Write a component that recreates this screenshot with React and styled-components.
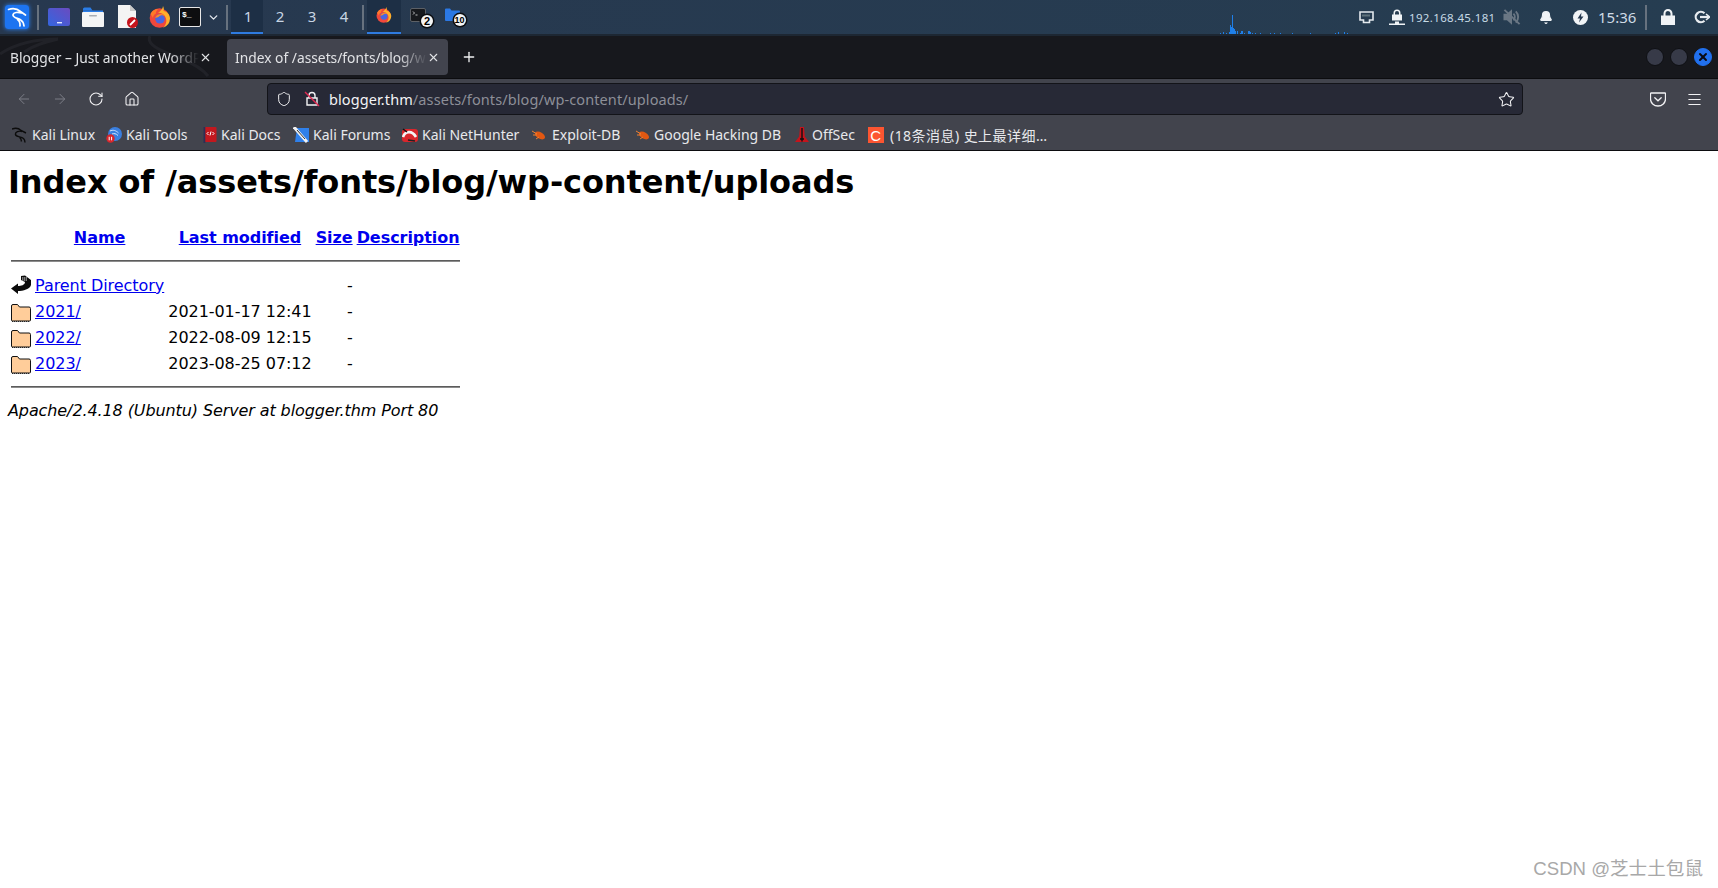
import React from "react";
import styled, { createGlobalStyle } from "styled-components";
import { ArrowLeft, ArrowRight, RotateCw, Home, Shield, Star, Menu, X, Plus, Bell, ChevronDown } from "lucide-react";

const GlobalStyle = createGlobalStyle`
  html, body { margin: 0; padding: 0; background: #fff; }
  body { font-family: "DejaVu Sans", sans-serif; overflow: hidden; }
`;

const UI_FONT = `"Noto Sans", "Noto Sans CJK SC", sans-serif`;

const Screen = styled.div`
  width: 1718px;
  height: 888px;
  position: relative;
  overflow: hidden;
  display: flex;
  flex-direction: column;
`;

/* kali panel */
const Panel = styled.div`
  height: 34px;
  flex: none;
  position: relative;
  display: flex;
  align-items: center;
  padding-left: 5px;
  background: linear-gradient(90deg, #27384f, #263d51);
  border-bottom: 2px solid #1d2733;
  color: #dfe6ee;
  font-family: ${UI_FONT};
`;
const PanelIcon = styled.div`
  width: ${(p) => p.$w}px;
  margin-left: ${(p) => p.$ml || 0}px;
  height: 34px;
  flex: none;
  display: flex;
  align-items: center;
  justify-content: center;
`;
const LogoGlow = styled.div`
  display: flex;
  border-radius: 3px;
  box-shadow: 0 0 4px #2a86ff;
`;
const PanelSep = styled.div`
  width: 2px;
  height: 25px;
  flex: none;
  margin-left: ${(p) => p.$ml}px;
  background: #67727f;
`;
const Workspaces = styled.div`
  display: flex;
  margin-left: 3px;
`;
const Workspace = styled.div`
  width: 32px;
  height: 34px;
  flex: none;
  box-sizing: border-box;
  display: flex;
  align-items: center;
  justify-content: center;
  padding-left: 2px;
  font-size: 15px;
  color: #c9d6e4;
  background: ${(p) => (p.$active ? "#1d2f45" : "transparent")};
  border-bottom: 2px solid ${(p) => (p.$active ? "#2f7be0" : "transparent")};
`;
const WinButton = styled.div`
  width: 34px;
  height: 34px;
  flex: none;
  box-sizing: border-box;
  margin-left: ${(p) => p.$ml || 0}px;
  display: flex;
  align-items: center;
  justify-content: center;
  padding-bottom: 3px;
  background: ${(p) => (p.$active ? "#1d2f45" : "transparent")};
  border-bottom: 2px solid ${(p) => (p.$active ? "#2f7be0" : "transparent")};
`;
const BadgeWrap = styled.div`
  position: relative;
  display: flex;
`;
const Badge = styled.span`
  position: absolute;
  right: ${(p) => p.$r}px;
  bottom: ${(p) => p.$b}px;
  width: 12px;
  height: 12px;
  border-radius: 50%;
  background: #f4f4f4;
  color: #000;
  font-family: "Liberation Sans", sans-serif;
  font-size: ${(p) => p.$size}px;
  font-weight: 700;
  line-height: 12px;
  text-align: center;
  box-shadow: 0 0 0 1.5px #0c0e12;
`;
const Tray = styled.div`
  margin-left: auto;
  display: flex;
  align-items: center;
  height: 34px;
  padding-right: 8px;
`;
const TrayIcon = styled.div`
  width: ${(p) => p.$w}px;
  margin-left: ${(p) => p.$ml}px;
  flex: none;
  display: flex;
  align-items: center;
  justify-content: center;
`;
const IpText = styled.span`
  font-size: 11.5px;
  margin-left: 4px;
  width: 87px;
  color: #c6dbe6;
  letter-spacing: 0.35px;
  white-space: nowrap;
`;
const Clock = styled.span`
  font-size: 15px;
  width: 36px;
  margin-left: 10px;
  color: #cfdbe6;
  white-space: nowrap;
`;
const NetGraph = styled.svg`
  position: absolute;
  left: 1220px;
  bottom: 0;
`;

/* browser chrome */
const TabBar = styled.div`
  height: 42px;
  flex: none;
  position: relative;
  display: flex;
  align-items: center;
  background: #17181d;
  border-bottom: 1px solid #0c0c0f;
  font-family: ${UI_FONT};
  font-size: 13.8px;
  color: #e2e3e6;
`;
const TabDragon = styled.svg`
  position: absolute;
  left: 0;
  top: 0;
`;
const Tab = styled.div`
  width: ${(p) => p.$w}px;
  margin-left: ${(p) => p.$ml}px;
  height: 36px;
  flex: none;
  position: relative;
  box-sizing: border-box;
  display: flex;
  align-items: center;
  padding: 0 8px 0 ${(p) => p.$pl}px;
  border-radius: 4px;
  background: ${(p) => (p.$active ? "#42444e" : "transparent")};
`;
const TabTitle = styled.span`
  flex: 1;
  overflow: hidden;
  white-space: nowrap;
  mask-image: linear-gradient(90deg, #000 85%, transparent);
`;
const NewTab = styled.div`
  margin-left: 13px;
  display: flex;
  position: relative;
`;
const WinControls = styled.div`
  margin-left: auto;
  margin-right: 6px;
  display: flex;
  gap: 6px;
  position: relative;
`;
const WinDot = styled.div`
  width: 18px;
  height: 18px;
  border-radius: 50%;
  box-sizing: border-box;
  display: flex;
  align-items: center;
  justify-content: center;
  background: ${(p) => (p.$close ? "#2170ee" : "#373a48")};
  border: 1px solid ${(p) => (p.$close ? "#2170ee" : "#0f1014")};
`;
const Toolbar = styled.div`
  height: 36px;
  flex: none;
  box-sizing: border-box;
  display: flex;
  align-items: center;
  padding: 4px 0 0 6px;
  background: #42444d;
  font-family: ${UI_FONT};
`;
const ToolBtn = styled.div`
  width: ${(p) => p.$w || 36}px;
  flex: none;
  display: flex;
  justify-content: center;
  color: ${(p) => (p.$dim ? "#7b7d86" : "#f2f2f4")};
`;
const UrlBar = styled.div`
  width: 1256px;
  height: 32px;
  flex: none;
  margin: 0 117px;
  box-sizing: border-box;
  display: flex;
  align-items: center;
  padding-left: 8px;
  background: #272936;
  border: 1px solid #131419;
  border-radius: 4px;
  color: #f3f3f5;
  font-size: 14.5px;
  letter-spacing: 0.1px;
`;
const LockSlot = styled.span`
  display: flex;
  margin-left: 12px;
`;
const UrlText = styled.span`
  margin-left: 9px;
  flex: 1;
  white-space: nowrap;
`;
const UrlPath = styled.span`
  color: #8d8f98;
`;
const BookmarkBar = styled.div`
  height: 36px;
  flex: none;
  box-sizing: border-box;
  display: flex;
  align-items: center;
  padding: 4px 0 0 12px;
  background: #42444d;
  border-bottom: 1px solid #0c0c0f;
  font-family: ${UI_FONT};
  font-size: 14px;
  color: #e8e9ec;
`;
const Bookmark = styled.div`
  width: ${(p) => p.$w}px;
  flex: none;
  display: flex;
  align-items: center;
  gap: ${(p) => p.$gap}px;
  letter-spacing: ${(p) => p.$ls || 0}px;
  white-space: nowrap;
`;
const BookmarkIcon = styled.svg`
  flex: none;
`;

/* the apache index page */
const Page = styled.div`
  flex: 1;
  background: #fff;
  color: #000;
  padding: 13px 8px 0;
  font-size: 16px;
`;
const Title = styled.h1`
  font-size: 32px;
  font-weight: bold;
  margin: 0 0 22px;
  line-height: 37px;
  letter-spacing: -0.1px;
`;
const Table = styled.table`
  border-spacing: 2px;
  letter-spacing: -0.05px;
`;
const Head = styled.th`
  padding: 1px;
  font-weight: bold;
  text-align: center;
  vertical-align: middle;
`;
const Cell = styled.td`
  padding: 1px;
  vertical-align: middle;
  text-align: ${(p) => p.$align || "left"};
`;
const IconCell = styled(Cell)`
  vertical-align: top;
`;
const IconBox = styled.svg`
  display: block;
`;
const Link = styled.a`
  color: #0000ee;
  text-decoration: underline;
`;
const Rule = styled.hr`
  margin: 8px 0;
  border: 0;
  border-top: 1px solid #5c5c5c;
  border-bottom: 1px solid #8c8c8c;
`;
const Footer = styled.address`
  font-style: italic;
  margin: 2px 0 16px;
  letter-spacing: -0.1px;
`;
const Watermark = styled.div`
  position: absolute;
  right: 15px;
  bottom: 8px;
  font-family: "Liberation Sans", "Noto Sans CJK SC", sans-serif;
  font-size: 18.6px;
  color: #a8a8a8;
  white-space: nowrap;
`;

const KaliLogo = () => (
  <svg width="24" height="24" viewBox="0 0 24 24">
    <rect width="24" height="24" rx="3" fill="#1d74f0" />
    <path d="M3.500 4.500c4.500-1.500 9-.5 12 2l5 3.500M16.500 8c-3.500-1.200-8-.8-8.500 1.800-.4 2.700 4.500 3.200 7.500 5 1.800 1.100 3 3 3.500 6M12.500 14.500c1.800 1.300 2.800 3.500 2.500 6.500" fill="none" stroke="#fff" strokeWidth="1.700" strokeLinecap="round" />
  </svg>
);
const Launcher = () => (
  <svg width="22" height="18" viewBox="0 0 22 18">
    <defs>
      <linearGradient id="lg" x1="0" y1="1" x2="1" y2="0">
        <stop offset="0" stopColor="#3366e0" />
        <stop offset="1" stopColor="#6a4bc0" />
      </linearGradient>
    </defs>
    <rect width="22" height="18" rx="2" fill="url(#lg)" />
    <rect x="9" y="14" width="5" height="1.400" fill="#dfe6ff" />
  </svg>
);
const FilesIcon = () => (
  <svg width="22" height="20" viewBox="0 0 22 20">
    <path d="M1 2A1.500 1.500 0 0 1 2.500 .5h6l2 3H1z" fill="#2a7de8" />
    <path d="M1 3.500h20V5H1z" fill="#2a7de8" />
    <rect y="5" width="22" height="15" rx="1" fill="#f3f4f5" />
    <rect x="7" y="8" width="8" height="1.500" rx=".7" fill="#a9adb3" />
  </svg>
);
const DocIcon = () => (
  <svg width="22" height="24" viewBox="0 0 22 24">
    <path d="M1 0h12l6 6v17H1z" fill="#f4f4f4" />
    <path d="M13 0l6 6h-6z" fill="#c9c9c9" />
    <circle cx="15.500" cy="17.500" r="5.500" fill="#c5141c" />
    <path d="M13 20l5-5" stroke="#fff" strokeWidth="1.800" />
  </svg>
);
const Firefox = ({ size = 22 }) => (
  <svg width={size} height={size} viewBox="0 0 22 22">
    <circle cx="10.500" cy="12" r="9.800" fill="#f0483c" />
    <path d="M14 0c1 2 1 3.500 .5 5C18 5.500 21 8.500 21 12.500a10 10 0 0 1-7 9.200c3-2.500 4.200-6.500 2.600-10.200C15.500 8 12 6.500 9 6.800 11.500 5 14 3 14 0z" fill="#ffb02a" />
    <path d="M1.500 8C3 4.500 6 3 9 3 7.800 4.500 6.500 6 7 7.500 5 8.500 4 10 4 12z" fill="#ff7a2a" />
    <circle cx="11" cy="12.800" r="4.800" fill="#4a66e0" />
    <path d="M6.200 12c.8-2.500 3-4 5.800-4 1.500 0 3 .7 4 2-2-1-5-1-6.500 1z" fill="#ff8a24" />
  </svg>
);
const TerminalIcon = () => (
  <svg width="22" height="20" viewBox="0 0 22 20">
    <rect x=".5" y=".5" width="21" height="19" rx="1.500" fill="#0d0e10" stroke="#e8e8e8" />
    <text x="3" y="9.500" fontSize="8" fontWeight="700" fill="#fff" fontFamily="Liberation Mono, monospace">$_</text>
  </svg>
);
const TerminalSmall = () => (
  <svg width="16" height="14" viewBox="0 0 16 14">
    <rect x=".5" y=".5" width="15" height="13" rx="1.500" fill="#17191d" stroke="#5c6066" />
    <path d="M3 3.500l1.500 1.500L3 6.500M5.500 7h2" stroke="#e8e8e8" fill="none" strokeWidth=".8" />
  </svg>
);
const FolderSmall = () => (
  <svg width="15" height="13" viewBox="0 0 15 13">
    <path d="M0 1.500A1 1 0 0 1 1 .5h4l1.500 2H14a1 1 0 0 1 1 1V12a1 1 0 0 1-1 1H1a1 1 0 0 1-1-1z" fill="#2b78e4" />
  </svg>
);
const NetIcon = () => (
  <svg width="15" height="13" viewBox="0 0 15 13" fill="none" stroke="#e4e9ee" strokeWidth="1.600">
    <path d="M1 1h13v8h-3.500v2.500h-6V9H1z" />
    <path d="M4 3.500v2M6 3.500v2M8 3.500v2M10 3.500v2" strokeWidth="1" stroke="#9aa" />
  </svg>
);
const VpnLock = () => (
  <svg width="16" height="17" viewBox="0 0 16 17" fill="#f0f3f6">
    <path d="M4.500 5.500V4a3.500 3.500 0 0 1 7 0v1.500H13v6H3v-6zM6 5.500h4V4a2 2 0 0 0-4 0z" />
    <rect y="14.500" width="16" height="1.500" />
    <rect x="6" y="12.500" width="4" height="3" />
  </svg>
);
const MuteIcon = () => (
  <svg width="19" height="18" viewBox="0 0 19 18" fill="none" stroke="#6a7784" strokeWidth="2">
    <path d="M1.500 6.500h3l4-3.500v12l-4-3.500h-3z" fill="#6a7784" />
    <path d="M11 5.500a5 5 0 0 1 0 7M13.500 3a8.500 8.500 0 0 1 0 12" />
    <path d="M1.500 1.500l16 15" />
  </svg>
);
const BoltIcon = () => (
  <svg width="15" height="15" viewBox="0 0 15 15">
    <circle cx="7.500" cy="7.500" r="7.500" fill="#f2f4f6" />
    <path d="M8.500 2.500l-4 6H7l-1 4 4.500-6H8z" fill="#27394f" />
  </svg>
);
const LogoutIcon = () => (
  <svg width="16" height="14" viewBox="0 0 16 14" fill="none" stroke="#e8ecf0" strokeWidth="2.200">
    <path d="M10.500 3.200a5.200 5.200 0 1 0 0 7.600" />
    <path d="M6 7h9" />
    <path d="M12 4l3.500 3-3.500 3" strokeWidth="1.600" />
  </svg>
);
const LockFill = () => (
  <svg width="14" height="16" viewBox="0 0 14 16" fill="#f0f3f6">
    <path d="M2.500 6.500v-2a4.500 4.500 0 0 1 9 0v2H14V16H0V6.500zM4.500 6.500h5v-2a2.500 2.500 0 0 0-5 0z" />
  </svg>
);
const PocketIcon = () => (
  <svg width="16" height="15" viewBox="0 0 16 15" fill="none" stroke="#f2f2f4" strokeWidth="1.300">
    <path d="M1 1h14a.5.5 0 0 1 .5.5V7a7.500 7 0 0 1-15 0V1.500A.5.5 0 0 1 1 1z" />
    <path d="M4.800 5.800L8 8.800l3.200-3" strokeLinecap="round" />
  </svg>
);
const InsecureLock = () => (
  <svg width="16" height="16" viewBox="0 0 16 16" fill="none">
    <path d="M5 7V4.500a3 3 0 0 1 6 0V7M3 7h10v7H3z" stroke="#f2f2f4" strokeWidth="1.400" />
    <path d="M1 1l14 14" stroke="#e22850" strokeWidth="1.400" />
  </svg>
);

const bookmarkIcons = {
  dragon: (
    <path d="M0 2c3-1 7-.5 9 1.500l5 2.500M10 4.500C7 3.500 3 5 3.500 7.500 4 10 9 9.500 11.500 11.500c1 1 1.500 2.500 1.500 4M7.500 10.500c1.500 1 2 2.500 1.800 4" fill="none" stroke="#0c0c0c" strokeWidth="1.400" />
  ),
  tools: (
    <>
      <circle cx="9" cy="7" r="7" fill="#3a7fe0" />
      <path d="M4 4c3-1.500 6-.5 8.500 2M6 7c2-.8 4-.5 6 1.500" stroke="#d5e6ff" fill="none" />
      <circle cx="4.500" cy="11.500" r="4.200" fill="#d8262c" />
      <path d="M3.200 9.800v3.500M5.600 9.800v3.500" stroke="#fff" />
    </>
  ),
  docs: (
    <>
      <rect x="2.500" width="12" height="15" rx="1" fill="#c2181e" />
      <rect x="1.500" width="1.800" height="16" fill="#2d2f55" />
      <path d="M6.500 5L5 6.500 6.500 8M10.500 5L12 6.500 10.500 8M9 4.500l-1 4" stroke="#fff" fill="none" />
    </>
  ),
  forums: (
    <>
      <path d="M4 1h12v14H2z" fill="#2f80ea" />
      <path d="M1 0l13 15" stroke="#f2f2f2" strokeWidth="3" />
      <path d="M4 3l8 9" stroke="#333" strokeWidth="1" />
    </>
  ),
  nethunter: (
    <>
      <rect y="2" width="16" height="13" rx="3" fill="#d9262c" />
      <path d="M1 10c2-6 9-7 13 0" fill="none" stroke="#f4f4f4" strokeWidth="2.600" />
      <path d="M6 13l7 1" stroke="#222" strokeWidth="1.500" />
      <path d="M1 2l4 3" stroke="#111" strokeWidth="1.500" />
    </>
  ),
  exploit: (
    <>
      <ellipse cx="9" cy="8.500" rx="5.500" ry="3.200" transform="rotate(30 9 8.500)" fill="#e25812" />
      <path d="M1 4l5 3M2 8h4M5 12l3-2" stroke="#f08030" />
    </>
  ),
  offsec: (
    <>
      <path d="M6 0h4l.8 9.500L15 15H1l4.200-5.500z" fill="#c4141c" />
      <path d="M8 1v13.500M6 12h4" stroke="#111" strokeWidth="1.400" />
    </>
  ),
  csdn: (
    <>
      <rect width="16" height="16" fill="#fc5531" />
      <text x="2.200" y="13.500" fontSize="15" fontFamily="Liberation Sans, sans-serif" fill="#fff">C</text>
    </>
  ),
};

const bookmarks = [
  { icon: "dragon", label: "Kali Linux", w: 94, gap: 4 },
  { icon: "tools", label: "Kali Tools", w: 96, gap: 4 },
  { icon: "docs", label: "Kali Docs", w: 91, gap: 3 },
  { icon: "forums", label: "Kali Forums", w: 109, gap: 4 },
  { icon: "nethunter", label: "Kali NetHunter", w: 129, gap: 4 },
  { icon: "exploit", label: "Exploit-DB", w: 104, gap: 5 },
  { icon: "exploit", label: "Google Hacking DB", w: 159, gap: 3 },
  { icon: "offsec", label: "OffSec", w: 74, gap: 2 },
  { icon: "csdn", label: "(18条消息) 史上最详细…", w: 220, gap: 6, ls: 0.45 },
];

const ParentIcon = () => (
  <IconBox width="20" height="22" viewBox="0 0 20 22">
    <path d="M0 14.500L7 9.500V12c3 0 7-1 7-4l-4-2V2l4-.5L20 6v5c-1 4-8 6-13 6v3z" fill="#0b0b0b" />
    <path d="M11 3h5v4h-5z" fill="#7a7a7a" />
    <path d="M12.500 3v4M14.500 3v4" stroke="#222" strokeWidth=".7" />
  </IconBox>
);
const FolderIcon = () => (
  <IconBox width="20" height="22" viewBox="0 0 20 22">
    <path d="M.5 6A1.500 1.500 0 0 1 2 4.500h4.500l2 2.500H18A1.500 1.500 0 0 1 19.500 8.500V20a1 1 0 0 1-1 1H1.500a1 1 0 0 1-1-1z" fill="#ffcd9a" stroke="#111" />
    <path d="M1 21.500h18" stroke="#222" strokeDasharray="1 1" />
  </IconBox>
);

const rows = [
  { name: "2021/", date: "2021-01-17 12:41" },
  { name: "2022/", date: "2022-08-09 12:15" },
  { name: "2023/", date: "2023-08-25 07:12" },
];

const netBars = [[0,1],[3,2],[6,1],[9,2],[10,9],[11,7],[12,19],[13,6],[14,5],[15,3],[17,3],[20,1],[21,3],[22,3],[24,1],[28,3],[29,3],[30,2],[32,1],[35,1],[40,1],[50,1],[54,1],[60,1],[72,1],[90,1],[115,1],[118,2],[124,2],[127,1]];

const App = () => {
  return (
    <Screen>
      <GlobalStyle />
      <Panel>
        <PanelIcon $w={24}><LogoGlow><KaliLogo /></LogoGlow></PanelIcon>
        <PanelSep $ml={8} />
        <PanelIcon $w={22} $ml={9}><Launcher /></PanelIcon>
        <PanelIcon $w={22} $ml={12}><FilesIcon /></PanelIcon>
        <PanelIcon $w={22} $ml={13}><DocIcon /></PanelIcon>
        <PanelIcon $w={22} $ml={10}><Firefox /></PanelIcon>
        <PanelIcon $w={22} $ml={8}><TerminalIcon /></PanelIcon>
        <PanelIcon $w={14} $ml={5}><ChevronDown size={13} color="#e4e8ee" strokeWidth={2.5} /></PanelIcon>
        <PanelSep $ml={6} />
        <Workspaces>
          <Workspace $active>1</Workspace>
          <Workspace>2</Workspace>
          <Workspace>3</Workspace>
          <Workspace>4</Workspace>
        </Workspaces>
        <PanelSep $ml={3} />
        <WinButton $active $ml={3}><Firefox size={16} /></WinButton>
        <WinButton>
          <BadgeWrap>
            <TerminalSmall />
            <Badge $r={-7} $b={-5} $size={11}>2</Badge>
          </BadgeWrap>
        </WinButton>
        <WinButton>
          <BadgeWrap>
            <FolderSmall />
            <Badge $r={-6} $b={-5} $size={9}>10</Badge>
          </BadgeWrap>
        </WinButton>
        <NetGraph width="130" height="20" viewBox="0 0 130 20">
          {netBars.map(([x, h]) => (
            <rect key={x} x={x} y={20 - h} width="1" height={h} fill="#1f7fe8" />
          ))}
        </NetGraph>
        <Tray>
          <TrayIcon $w={15} $ml={0}><NetIcon /></TrayIcon>
          <TrayIcon $w={16} $ml={15}><VpnLock /></TrayIcon>
          <IpText>192.168.45.181</IpText>
          <TrayIcon $w={18} $ml={7}><MuteIcon /></TrayIcon>
          <TrayIcon $w={14} $ml={18}><Bell size={15} color="#f0f3f6" fill="#f0f3f6" /></TrayIcon>
          <TrayIcon $w={15} $ml={20}><BoltIcon /></TrayIcon>
          <Clock>15:36</Clock>
          <PanelSep $ml={11} />
          <TrayIcon $w={14} $ml={14}><LockFill /></TrayIcon>
          <TrayIcon $w={16} $ml={19}><LogoutIcon /></TrayIcon>
        </Tray>
      </Panel>

      <TabBar>
        <TabDragon width="240" height="42" viewBox="0 0 240 42" fill="none" stroke="#212228" strokeWidth="3">
          <path d="M0 18C18 6 40 3 58 3M24 16C34 9 46 6 58 3M150 0c-4 8 8 14 30 22 12 5 22 10 28 18" />
        </TabDragon>
        <Tab $w={220} $ml={0} $pl={10}>
          <TabTitle>Blogger – Just another WordPress</TabTitle>
          <X size={13} color="#e2e3e6" />
        </Tab>
        <Tab $w={221} $ml={7} $pl={8} $active>
          <TabTitle>Index of /assets/fonts/blog/wp-content/uploads</TabTitle>
          <X size={13} color="#e2e3e6" />
        </Tab>
        <NewTab><Plus size={16} color="#f0f0f2" /></NewTab>
        <WinControls>
          <WinDot />
          <WinDot />
          <WinDot $close><X size={12} color="#0b0b12" strokeWidth={4} /></WinDot>
        </WinControls>
      </TabBar>

      <Toolbar>
        <ToolBtn $dim><ArrowLeft size={16} strokeWidth={1.5} /></ToolBtn>
        <ToolBtn $dim><ArrowRight size={16} strokeWidth={1.5} /></ToolBtn>
        <ToolBtn><RotateCw size={16} strokeWidth={1.6} /></ToolBtn>
        <ToolBtn><Home size={16} strokeWidth={1.6} /></ToolBtn>
        <UrlBar>
          <Shield size={16} color="#f2f2f4" strokeWidth={1.5} />
          <LockSlot><InsecureLock /></LockSlot>
          <UrlText>blogger.thm<UrlPath>/assets/fonts/blog/wp-content/uploads/</UrlPath></UrlText>
          <ToolBtn $w={32}><Star size={17} strokeWidth={1.5} /></ToolBtn>
        </UrlBar>
        <ToolBtn><PocketIcon /></ToolBtn>
        <ToolBtn><Menu size={17} strokeWidth={1.6} /></ToolBtn>
      </Toolbar>

      <BookmarkBar>
        {bookmarks.map((b) => (
          <Bookmark key={b.label} $w={b.w} $gap={b.gap} $ls={b.ls}>
            <BookmarkIcon width="16" height="16" viewBox="0 0 16 16">{bookmarkIcons[b.icon]}</BookmarkIcon>
            {b.label}
          </Bookmark>
        ))}
      </BookmarkBar>

      <Page>
        <Title>Index of /assets/fonts/blog/wp-content/uploads</Title>
        <Table>
          <tbody>
            <tr>
              <Head><IconBox width="20" height="22" /></Head>
              <Head><Link href="#">Name</Link></Head>
              <Head><Link href="#">Last modified</Link></Head>
              <Head><Link href="#">Size</Link></Head>
              <Head><Link href="#">Description</Link></Head>
            </tr>
            <tr><Head colSpan={5}><Rule /></Head></tr>
            <tr>
              <IconCell><ParentIcon /></IconCell>
              <Cell><Link href="#">Parent Directory</Link></Cell>
              <Cell>&nbsp;</Cell>
              <Cell $align="right">- </Cell>
              <Cell>&nbsp;</Cell>
            </tr>
            {rows.map((r) => (
              <tr key={r.name}>
                <IconCell><FolderIcon /></IconCell>
                <Cell><Link href="#">{r.name}</Link></Cell>
                <Cell $align="right">{r.date} </Cell>
                <Cell $align="right">- </Cell>
                <Cell>&nbsp;</Cell>
              </tr>
            ))}
            <tr><Head colSpan={5}><Rule /></Head></tr>
          </tbody>
        </Table>
        <Footer>Apache/2.4.18 (Ubuntu) Server at blogger.thm Port 80</Footer>
      </Page>
      <Watermark>CSDN @芝士土包鼠</Watermark>
    </Screen>
  );
};

export default App;
